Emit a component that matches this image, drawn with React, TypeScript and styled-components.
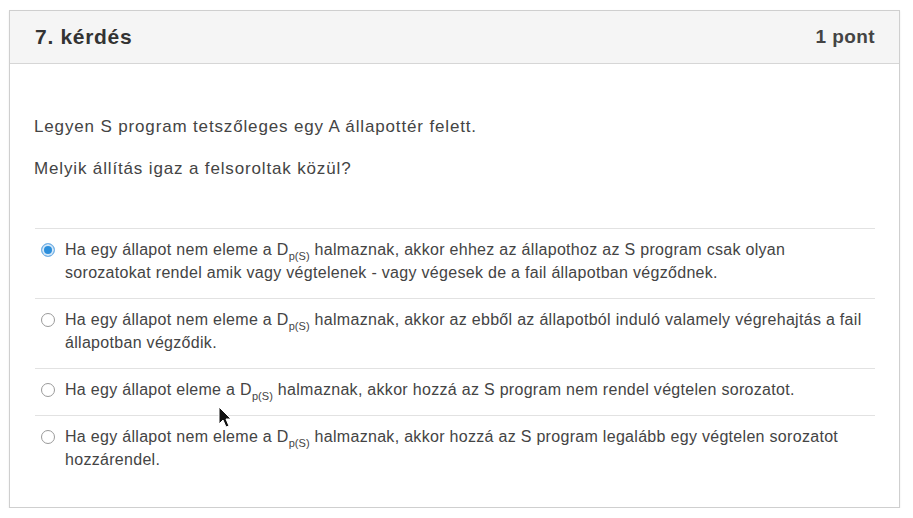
import React from "react";
import styled, { createGlobalStyle } from "styled-components";

const Global = createGlobalStyle`
  html, body { margin: 0; padding: 0; background: #ffffff; }
  body { font-family: "Liberation Sans", Arial, sans-serif; color: #3a3a3a; }
`;

const Page = styled.div`
  position: relative;
  padding: 10px 13px 0 9px;
`;

const Card = styled.section`
  box-sizing: border-box;
  height: 498px;
  border: 1px solid #cfcfcf;
  background: #fff;
  box-shadow: 0 1px 2px rgba(0,0,0,0.08);
  display: flex;
  flex-direction: column;
`;

const Header = styled.header`
  box-sizing: border-box;
  height: 53px;
  background: #f5f5f5;
  border-bottom: 1px solid #d6d6d6;
  display: flex;
  align-items: center;
  justify-content: space-between;
  padding: 0 24px 0 25px;
`;

const Title = styled.h2`
  margin: 0;
  font-size: 21px;
  font-weight: bold;
  color: #333;
  letter-spacing: 0.7px;
`;

const Points = styled.span`
  font-size: 19px;
  font-weight: bold;
  color: #444;
  letter-spacing: 0.4px;
`;

const Body = styled.div`
  padding: 52px 24px 0 24px;
`;

const Prompt = styled.p`
  margin: 0 0 20px;
  font-size: 17px;
  line-height: 22px;
  letter-spacing: 0.85px;
  color: #444;
`;

const Options = styled.ul`
  list-style: none;
  margin: 48px 0 0 1px;
  padding: 0;
`;

const Option = styled.li`
  display: flex;
  align-items: flex-start;
  border-top: 1px solid #e2e2e2;
  padding: 9px 8px 14px 0;
`;

const Radio = styled.span<{ $checked?: boolean }>`
  box-sizing: border-box;
  flex: none;
  width: 14px;
  height: 14px;
  margin: 5px 10px 0 6px;
  border-radius: 50%;
  border: 1px solid ${p => (p.$checked ? "#7bb4e6" : "#9a9a9a")};
  background: ${p => (p.$checked ? "#2c8fdc" : "#fff")};
  box-shadow: ${p => (p.$checked ? "inset 0 0 0 2px #d5e8f8" : "none")};
`;

const OptionText = styled.span`
  font-size: 16px;
  line-height: 23px;
  letter-spacing: 0.3px;
  color: #444;
`;

const Sub = styled.sub`
  font-size: 11px;
  letter-spacing: 0.1px;
  vertical-align: -5px;
  line-height: 0;
`;

const Cursor = styled.svg`
  position: absolute;
  left: 218px;
  top: 406px;
  width: 16px;
  height: 24px;
`;

const D = () => (
  <>
    D<Sub>p(S)</Sub>
  </>
);

const answers: { checked?: boolean; before: string; after: string }[] = [
  {
    checked: true,
    before: "Ha egy állapot nem eleme a ",
    after:
      " halmaznak, akkor ehhez az állapothoz az S program csak olyan sorozatokat rendel amik vagy végtelenek - vagy végesek de a fail állapotban végződnek.",
  },
  {
    before: "Ha egy állapot nem eleme a ",
    after:
      " halmaznak, akkor az ebből az állapotból induló valamely végrehajtás a fail állapotban végződik.",
  },
  {
    before: "Ha egy állapot eleme a ",
    after: " halmaznak, akkor hozzá az S program nem rendel végtelen sorozatot.",
  },
  {
    before: "Ha egy állapot nem eleme a ",
    after:
      " halmaznak, akkor hozzá az S program legalább egy végtelen sorozatot hozzárendel.",
  },
];

export default function App() {
  return (
    <Page>
      <Global />
      <Card>
        <Header>
          <Title>7. kérdés</Title>
          <Points>1 pont</Points>
        </Header>
        <Body>
          <Prompt>Legyen S program tetszőleges egy A állapottér felett.</Prompt>
          <Prompt>Melyik állítás igaz a felsoroltak közül?</Prompt>
          <Options>
            {answers.map((a, i) => (
              <Option key={i}>
                <Radio $checked={a.checked} />
                <OptionText>
                  {a.before}
                  <D />
                  {a.after}
                </OptionText>
              </Option>
            ))}
          </Options>
        </Body>
      </Card>
      <Cursor viewBox="0 0 16 24">
        <path
          d="M1 1 L1 18 L5 14 L8 21 L11 20 L8 13 L13 13 Z"
          fill="#111"
          stroke="#fff"
          strokeWidth="1"
          strokeLinejoin="round"
        />
      </Cursor>
    </Page>
  );
}
